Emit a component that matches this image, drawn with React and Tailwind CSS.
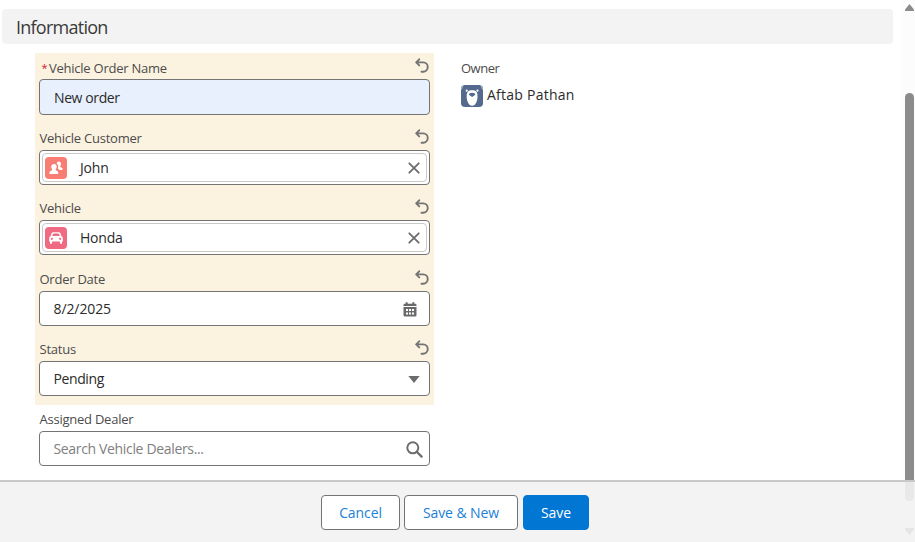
import React from 'react';

const UndoIcon = () => (
  <svg className="block h-[15px] w-[14px]" viewBox="0 0 14 15" fill="none" stroke="#747474" strokeWidth="1.9" strokeLinecap="round" strokeLinejoin="round">
    <path d="M4.2 1.300 1.200 4.400 4.200 7.400M1.500 4.400H8.200a4.500 4.600 0 0 1 0 9.300H6.500" />
  </svg>
);

const CloseIcon = () => (
  <svg className="block h-3 w-3" viewBox="0 0 12 12" fill="none" stroke="#6c6c6c" strokeWidth="1.8" strokeLinecap="round">
    <path d="M1.300 1.300 10.700 10.700M10.700 1.300 1.300 10.700" />
  </svg>
);

const CalendarIcon = () => (
  <svg className="block h-[15px] w-[14px]" viewBox="0 0 14 15">
    <path fill="#6a6a6a" d="M3 .3h1.3q.4 0 .4.5v.9h4.6V.8q0-.5.4-.5H11q.4 0 .4.5v.9h.9q1.2 0 1.2 1.2v1H.5v-1q0-1.2 1.2-1.2h.9V.8q0-.5.4-.5ZM.5 5.100h13V13q0 1.500-1.300 1.500H1.800Q.5 14.500.5 13Z" />
    <path fill="#fff" d="M3 7h2v2H3ZM6 7h2v2H6ZM9 7h2v2H9ZM3 10.500h2v2H3ZM6 10.500h2v2H6ZM9 10.500h2v2H9Z" />
  </svg>
);

const SearchIcon = () => (
  <svg className="block h-[17px] w-[17px]" viewBox="0 0 17 17" fill="none" stroke="#6c6c6c" strokeLinecap="round">
    <circle cx="6.800" cy="6.800" r="5.500" strokeWidth="2" />
    <path d="m11 11 4.600 4.600" strokeWidth="2.200" />
  </svg>
);

const CustomerIcon = () => (
  <svg className="block h-[22px] w-[22px] rounded bg-[#f87e74]" viewBox="0 0 22 22" fill="#fff">
    <path d="M11.700 6.700C11.800 5.300 12.600 4.600 13.900 4.600S16 5.500 16 7c0 1-.3 1.600-.8 2.200-.2.500 0 .8.500 1 1.200.4 1.900 1 1.900 2 0 .6-.3.900-.9.900H14.400c-.4-.7-1-1.200-1.700-1.500.5-1 .7-2.100.4-3.200-.2-.700-.7-1.300-1.400-1.700Z" />
    <path d="M9.100 7c1.600 0 2.600 1.200 2.600 2.800 0 1-.4 1.800-.9 2.400-.4.600-.1.900.5 1.200 1.400.5 2 1.200 2 2.500 0 .8-.4 1.200-1.100 1.200H5.600c-.8 0-1.200-.4-1.200-1.200 0-1.300.8-2 2.100-2.500.7-.3 1-.6.500-1.200-.5-.6-.8-1.400-.8-2.400C6.200 8.200 7.500 7 9.100 7Z" />
  </svg>
);

const VehicleIcon = () => (
  <svg className="block h-[22px] w-[22px] rounded bg-[#ef6a82]" viewBox="0 0 22 22">
    <path fill="#fff" d="m5.500 9.300 1-2.800Q7 5.200 8.300 5.200h5.400q1.300 0 1.800 1.300l1 2.800q1.300.3 1.300 1.700v3.500h-.8v1.400q0 1-1 1t-1-1v-1.400H7v1.400q0 1-1 1t-1-1v-1.400h-.8V11q0-1.400 1.300-1.700Z" />
    <path fill="#ef6a82" d="M7.200 9.100h7.600l-.8-2q-.2-.5-.7-.5H8.700q-.5 0-.7.5Z" />
    <circle cx="6.900" cy="11.800" r="1.100" fill="#ef6a82" />
    <circle cx="15.100" cy="11.800" r="1.100" fill="#ef6a82" />
  </svg>
);

const BearAvatar = () => (
  <svg className="block h-[22px] w-[22px] rounded bg-[#54698d]" viewBox="0 0 22 22">
    <path fill="#a9b5ca" d="M0 0h3.300Q1.500 1.500 1.200 4L0 5ZM22 0h-3.300q1.800 1.500 2.100 4l1.200 1Z" />
    <circle cx="5.700" cy="5.700" r="1.100" fill="#fff" />
    <circle cx="16.500" cy="5.700" r="1.100" fill="#fff" />
    <path fill="#fff" d="M11.100 5.300c3.600 0 4.900 1.500 5.300 4.200.6 4.300-1 11.300-5.300 11.300S5.200 13.800 5.800 9.500c.4-2.700 1.700-4.200 5.300-4.200Z" />
    <path fill="#54698d" d="M8.100 9.300q0-1.600 3-1.600t3 1.600q0 1.200-3 2.700-3-1.500-3-2.700Z" />
  </svg>
);

function Field({ label, required, undo, tall, children, boxClass = 'bg-white' }) {
  return (
    <div className={tall ? 'h-[71px] px-1' : 'h-[70px] px-1'}>
      <div className="flex h-[26px] items-start justify-between pr-px pt-[5px] text-[13px] tracking-[-0.24px] text-[#4c4c4c]">
        <div className={`flex pl-[0.5px] ${required ? 'leading-5' : 'leading-[18px]'}`}>
          {required && <span className="ml-0.5 mr-[2.5px] w-[5px] text-[11px] text-[#d3202f]">*</span>}
          <span>{label}</span>
        </div>
        {undo && <UndoIcon />}
      </div>
      <div className={`flex items-center rounded border border-[#747474] text-sm tracking-[-0.2px] text-[#2b2b2b] ${required ? 'h-9' : 'h-[35px]'} ${boxClass}`}>
        {children}
      </div>
    </div>
  );
}

const Lookup = ({ icon, value }) => (
  <div className="mx-0.5 flex h-[29px] flex-1 items-center rounded-sm border border-[#c9c9c9] pl-0.5 pr-1.5">
    {icon}
    <span className="ml-[13px] flex-1">{value}</span>
    <CloseIcon />
  </div>
);

const Button = ({ className, children }) => (
  <button className={`h-[35px] rounded border text-sm tracking-[-0.1px] ${className}`}>{children}</button>
);

export default function App() {
  return (
    <div className="flex h-[542px] w-[915px] flex-col overflow-hidden bg-white font-['Open_Sans','Noto_Sans',sans-serif]">
      <div className="flex h-[480px]">
        <main className="w-[902px] pl-0.5 pr-[9px] pt-[9px]">
          <h2 className="flex h-[35px] items-center rounded bg-[#f3f3f3] pl-[14px] pt-px text-lg text-[#3a3a3a]">
            <span className="tracking-[-0.75px]">Information</span>
          </h2>
          <div className="mt-[9px] flex pl-[33px]">
            <section className="w-[399px]">
              <div className="h-[352px] bg-[#fbf2e0]">
                <Field label="Vehicle Order Name" required undo tall boxClass="bg-[#e8f0fe]">
                  <span className="pl-[14px] pt-0.5 tracking-[-0.4px]">New order</span>
                </Field>
                <Field label="Vehicle Customer" undo>
                  <Lookup icon={<CustomerIcon />} value="John" />
                </Field>
                <Field label="Vehicle" undo tall>
                  <Lookup icon={<VehicleIcon />} value="Honda" />
                </Field>
                <Field label="Order Date" undo>
                  <span className="flex-1 pl-[13.5px] tracking-[-0.1px]">8/2/2025</span>
                  <span className="mr-[12.5px] mt-0.5"><CalendarIcon /></span>
                </Field>
                <Field label="Status" undo>
                  <span className="flex-1 pl-[13.5px] tracking-[-0.4px]">Pending</span>
                  <svg className="mr-[9.5px] mt-0.5 h-[7px] w-3" viewBox="0 0 12 7"><path d="M.3 0h11.400L6 7Z" fill="#6c6c6c" /></svg>
                </Field>
              </div>
              <Field label="Assigned Dealer">
                <span className="flex-1 pl-[13.5px] tracking-[-0.34px] text-[#808080]">Search Vehicle Dealers...</span>
                <span className="mr-1.5 mt-0.5"><SearchIcon /></span>
              </Field>
            </section>
            <section className="pl-[27px] pt-[5px]">
              <div className="text-[13px] leading-5 tracking-[-0.5px] text-[#4c4c4c]">Owner</div>
              <div className="mt-[7px] flex h-[22px] items-center gap-1 text-sm tracking-[0.24px] text-[#2b2b2b]">
                <BearAvatar />
                <span className="pb-0.5">Aftab Pathan</span>
              </div>
            </section>
          </div>
        </main>
        <div className="flex w-[13px] flex-col items-end bg-[#fcfcfc] pr-px pt-1">
          <svg className="h-[7px] w-[9px]" viewBox="0 0 9 7"><path d="M4.500 0 9 5.500V7H0V5.500Z" fill="#8b8b8b" /></svg>
          <div className="mt-[82px] h-[387px] w-[9px] rounded-t-full bg-[#8b8b8b]" />
        </div>
      </div>
      <footer className="flex h-[62px] border-t-2 border-[#c9c9c9] bg-[#f3f3f3]">
        <div className="flex flex-1 pl-[321px] pt-[13px]">
          <Button className="w-[79px] border-[#747474] bg-white text-[#1b80d8]">Cancel</Button>
          <Button className="ml-1 w-[114px] border-[#747474] bg-white text-[#1b80d8]">Save &amp; New</Button>
          <Button className="ml-[5px] w-[66px] border-[#0176d3] bg-[#0176d3] text-white">Save</Button>
        </div>
        <div className="flex w-[13px] flex-col items-end pr-px">
          <div className="h-[19px] w-[9px] rounded-b-full bg-[#e8e8e8]" />
          <svg className="mt-[27px] h-[7px] w-[9px]" viewBox="0 0 9 7"><path d="M0 0h9v1.500L4.500 7 0 1.500Z" fill="#e5e5e5" /></svg>
        </div>
      </footer>
    </div>
  );
}
